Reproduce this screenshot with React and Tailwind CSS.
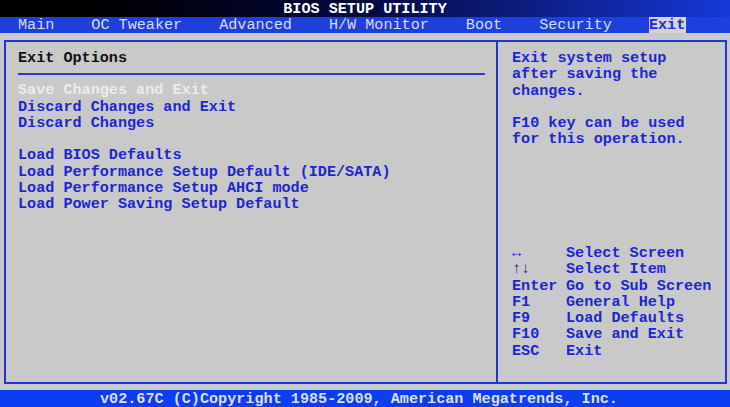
export default function App() {
  const menu = ['Main', 'OC Tweaker', 'Advanced', 'H/W Monitor', 'Boot', 'Security', 'Exit']
  const options = [
    'Save Changes and Exit',
    'Discard Changes and Exit',
    'Discard Changes',
    null,
    'Load BIOS Defaults',
    'Load Performance Setup Default (IDE/SATA)',
    'Load Performance Setup AHCI mode',
    'Load Power Saving Setup Default',
  ]
  const keys = [
    ['↔', 'Select Screen'],
    ['↑↓', 'Select Item'],
    ['Enter', 'Go to Sub Screen'],
    ['F1', 'General Help'],
    ['F9', 'Load Defaults'],
    ['F10', 'Save and Exit'],
    ['ESC', 'Exit'],
  ]

  return (
    <div className="w-[730px] h-[407px] flex flex-col bg-[#c9c9c9] font-['Liberation_Mono','DejaVu_Sans_Mono',monospace] text-[15.15px] leading-[16.3px] overflow-hidden">
      {/* Title */}
      <div className="h-[17px] leading-[17px] pt-[1px] flex items-center justify-center bg-gradient-to-r from-black via-[#050a40] to-[#1638d8] text-white font-bold">
        BIOS SETUP UTILITY
      </div>

      {/* Menu */}
      <div className="h-[16px] flex items-stretch pl-[18px] gap-[37px] bg-[#1d40dc] text-[#d6dcf5] leading-[15px]">
        {menu.map((m) => (
          <span
            key={m}
            className={m === 'Exit' ? 'flex items-center pt-[1px] bg-[#d2d2d2] text-[#1c2ed0] font-bold pr-[1px]' : 'flex items-center pt-[1px]'}
          >
            {m}
          </span>
        ))}
      </div>

      {/* Main */}
      <div className="flex-1 pt-[7px] pb-[6px] pl-[4px] pr-[3px] flex">
        <div className="flex-1 flex border-2 border-[#2334d6]">
          {/* Left panel */}
          <div className="w-[492px] border-r-2 border-[#2334d6] pl-[12px] pr-[11px] pt-[8px] font-bold">
            <div className="text-[#111]">Exit Options</div>
            <div className="h-[2px] bg-[#2a3ad8] mt-[7px] mb-[7px]" />
            <div>
              {options.map((o, i) =>
                o === null ? (
                  <div key={i} className="h-[16.3px]" />
                ) : (
                  <div key={i} className={i === 0 ? 'text-[#ececec]' : 'text-[#1c25d2]'}>
                    {o}
                  </div>
                )
              )}
            </div>
          </div>

          {/* Right panel */}
          <div className="flex-1 flex flex-col pl-[14px] pt-[8px] pb-[23px] text-[#1c25d2] font-bold">
            <div>Exit system setup</div>
            <div>after saving the</div>
            <div>changes.</div>
            <div className="h-[16.3px]" />
            <div>F10 key can be used</div>
            <div>for this operation.</div>

            <div className="mt-auto">
              {keys.map(([k, d]) => (
                <div key={k} className="flex">
                  <span className="w-[54px] whitespace-pre">{k}</span>
                  <span>{d}</span>
                </div>
              ))}
            </div>
          </div>
        </div>
      </div>

      {/* Footer */}
      <div className="h-[17px] leading-[15px] pt-[2px] flex items-center pl-[100px] bg-[#0d3df2] text-[#dcdff0] font-bold whitespace-pre">
        v02.67C (C)Copyright 1985-2009, American Megatrends, Inc.
      </div>
    </div>
  )
}
